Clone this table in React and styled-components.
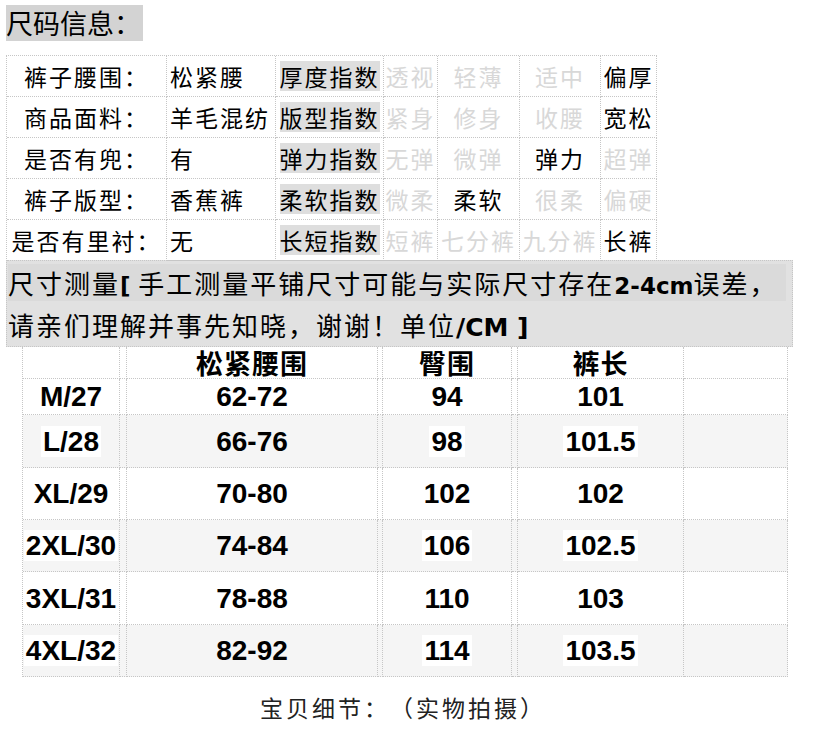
import React from "react";
import styled, { createGlobalStyle } from "styled-components";

const Global = createGlobalStyle`
  html, body { margin: 0; padding: 0; background: #fff; }
  body {
    font-family: "Noto Sans CJK SC", "Noto Sans", sans-serif;
    color: #000;
    text-spacing-trim: space-all;
  }
`;

const CJK = `"Noto Sans CJK SC", "Noto Sans", sans-serif`;
const DOT = "1px dotted #c6c6c6";

const Page = styled.div`
  width: 816px;
  box-sizing: border-box;
  padding: 5px 0 10px 6px;
`;

const Title = styled.div`
  display: inline-block;
  vertical-align: top;
  background: #d3d3d3;
  font-family: ${CJK};
  font-size: 27px;
  line-height: 36px;
  height: 36px;
  padding-right: 2px;
`;

const InfoGrid = styled.div`
  margin-top: 14px;
  display: grid;
  grid-template-columns: 160px 109px 108px 54px 82px 81px 56px;
  width: 651px;
  border-top: ${DOT};
  border-left: ${DOT};
  box-sizing: border-box;
`;

const InfoCell = styled.div`
  box-sizing: border-box;
  height: 41px;
  border-right: ${DOT};
  border-bottom: ${DOT};
  display: flex;
  align-items: center;
  justify-content: ${(p) => (p.$left ? "flex-start" : "center")};
  padding-left: ${(p) => (p.$left ? "3px" : "0")};
  font-family: ${CJK};
  font-size: 23px;
  letter-spacing: 2px;
  white-space: nowrap;
  overflow: visible;
  color: ${(p) => (p.$muted ? "#d8d8d8" : "#000")};
`;

const Label = styled.span`
  display: inline-block;
  background: #dedede;
  line-height: 30px;
  height: 30px;
`;

const Notice = styled.div`
  margin-top: -1px;
  width: 787px;
  box-sizing: border-box;
  border: ${DOT};
  background: #e1e1e1;
  padding: 1px 0 0 1px;
  font-family: ${CJK};
  font-size: 26px;
  letter-spacing: 2px;
  white-space: nowrap;
`;

const NoticeLine = styled.div`
  height: 42px;
  line-height: 42px;
`;

const Band = styled.span`
  background: ${(p) => (p.$band ? "#dadada" : "transparent")};
  padding-right: 8px;
`;

const Strong = styled.b`
  font-family: "DejaVu Sans", "Liberation Sans", sans-serif;
  font-weight: 700;
  font-size: ${(p) => (p.$big ? 25 : 23)}px;
  letter-spacing: 0;
`;

const SizeTable = styled.div`
  margin-left: 16px;
  width: 766px;
  border-left: ${DOT};
  box-sizing: border-box;
`;

const SizeRow = styled.div`
  display: grid;
  grid-template-columns: 97px 7px 251px 5px 129px 6px 166px 104px;
  height: ${(p) => p.$h}px;
  background: ${(p) => (p.$alt ? "#f5f5f5" : "#fff")};
`;

const SizeCell = styled.div`
  box-sizing: border-box;
  border-right: ${DOT};
  border-bottom: ${DOT};
  display: flex;
  align-items: center;
  justify-content: center;
  font-family: "Liberation Sans", Arial, sans-serif;
  font-weight: 700;
  font-size: 28px;
  white-space: nowrap;
`;

const HeadText = styled.span`
  font-family: ${CJK};
  font-weight: 700;
  font-size: 27px;
  letter-spacing: 1px;
  line-height: 30px;
  background: #fff;
`;

const Chip = styled.span`
  display: inline-block;
  line-height: 31px;
  padding: 0 2px;
  background: ${(p) => (p.$white ? "#fff" : "transparent")};
`;

const Caption = styled.div`
  margin-top: 15px;
  width: 794px;
  text-align: center;
  font-family: ${CJK};
  font-size: 23px;
  letter-spacing: 3px;
  line-height: 30px;
  color: #222;
`;

const infoRows = [
  { label: "裤子腰围：", value: "松紧腰", idx: "厚度指数", opts: ["透视", "轻薄", "适中", "偏厚"], on: 3 },
  { label: "商品面料：", value: "羊毛混纺", idx: "版型指数", opts: ["紧身", "修身", "收腰", "宽松"], on: 3 },
  { label: "是否有兜：", value: "有", idx: "弹力指数", opts: ["无弹", "微弹", "弹力", "超弹"], on: 2 },
  { label: "裤子版型：", value: "香蕉裤", idx: "柔软指数", opts: ["微柔", "柔软", "很柔", "偏硬"], on: 1 },
  { label: "是否有里衬：", value: "无", idx: "长短指数", opts: ["短裤", "七分裤", "九分裤", "长裤"], on: 3 },
];

const sizes = [
  { s: "M/27", w: "62-72", h: "94", l: "101", ht: 36 },
  { s: "L/28", w: "66-76", h: "98", l: "101.5", ht: 53, alt: true },
  { s: "XL/29", w: "70-80", h: "102", l: "102", ht: 52 },
  { s: "2XL/30", w: "74-84", h: "106", l: "102.5", ht: 52, alt: true },
  { s: "3XL/31", w: "78-88", h: "110", l: "103", ht: 53 },
  { s: "4XL/32", w: "82-92", h: "114", l: "103.5", ht: 52, alt: true },
];

export default function App() {
  return (
    <Page>
      <Global />
      <Title>尺码信息：</Title>

      <InfoGrid>
        {infoRows.map((r) => (
          <React.Fragment key={r.label}>
            <InfoCell>{r.label}</InfoCell>
            <InfoCell $left>{r.value}</InfoCell>
            <InfoCell>
              <Label>{r.idx}</Label>
            </InfoCell>
            {r.opts.map((o, i) => (
              <InfoCell key={o} $muted={i !== r.on}>
                {o}
              </InfoCell>
            ))}
          </React.Fragment>
        ))}
      </InfoGrid>

      <Notice>
        <NoticeLine>
          <Band $band>
            尺寸测量<Strong>[</Strong> 手工测量平铺尺寸可能与实际尺寸存在<Strong>2-4cm</Strong>误差，
          </Band>
        </NoticeLine>
        <NoticeLine>
          请亲们理解并事先知晓，谢谢！单位<Strong $big>/CM ]</Strong>
        </NoticeLine>
      </Notice>

      <SizeTable>
        <SizeRow $h={32}>
          <SizeCell />
          <SizeCell />
          <SizeCell>
            <HeadText>松紧腰围</HeadText>
          </SizeCell>
          <SizeCell />
          <SizeCell>
            <HeadText>臀围</HeadText>
          </SizeCell>
          <SizeCell />
          <SizeCell>
            <HeadText>裤长</HeadText>
          </SizeCell>
          <SizeCell />
        </SizeRow>
        {sizes.map((r) => (
          <SizeRow key={r.s} $h={r.ht} $alt={r.alt}>
            <SizeCell>
              <Chip $white={r.alt}>{r.s}</Chip>
            </SizeCell>
            <SizeCell />
            <SizeCell>
              <Chip>{r.w}</Chip>
            </SizeCell>
            <SizeCell />
            <SizeCell>
              <Chip $white={r.alt}>{r.h}</Chip>
            </SizeCell>
            <SizeCell />
            <SizeCell>
              <Chip $white={r.alt}>{r.l}</Chip>
            </SizeCell>
            <SizeCell />
          </SizeRow>
        ))}
      </SizeTable>

      <Caption>宝贝细节：（实物拍摄）</Caption>
    </Page>
  );
}
